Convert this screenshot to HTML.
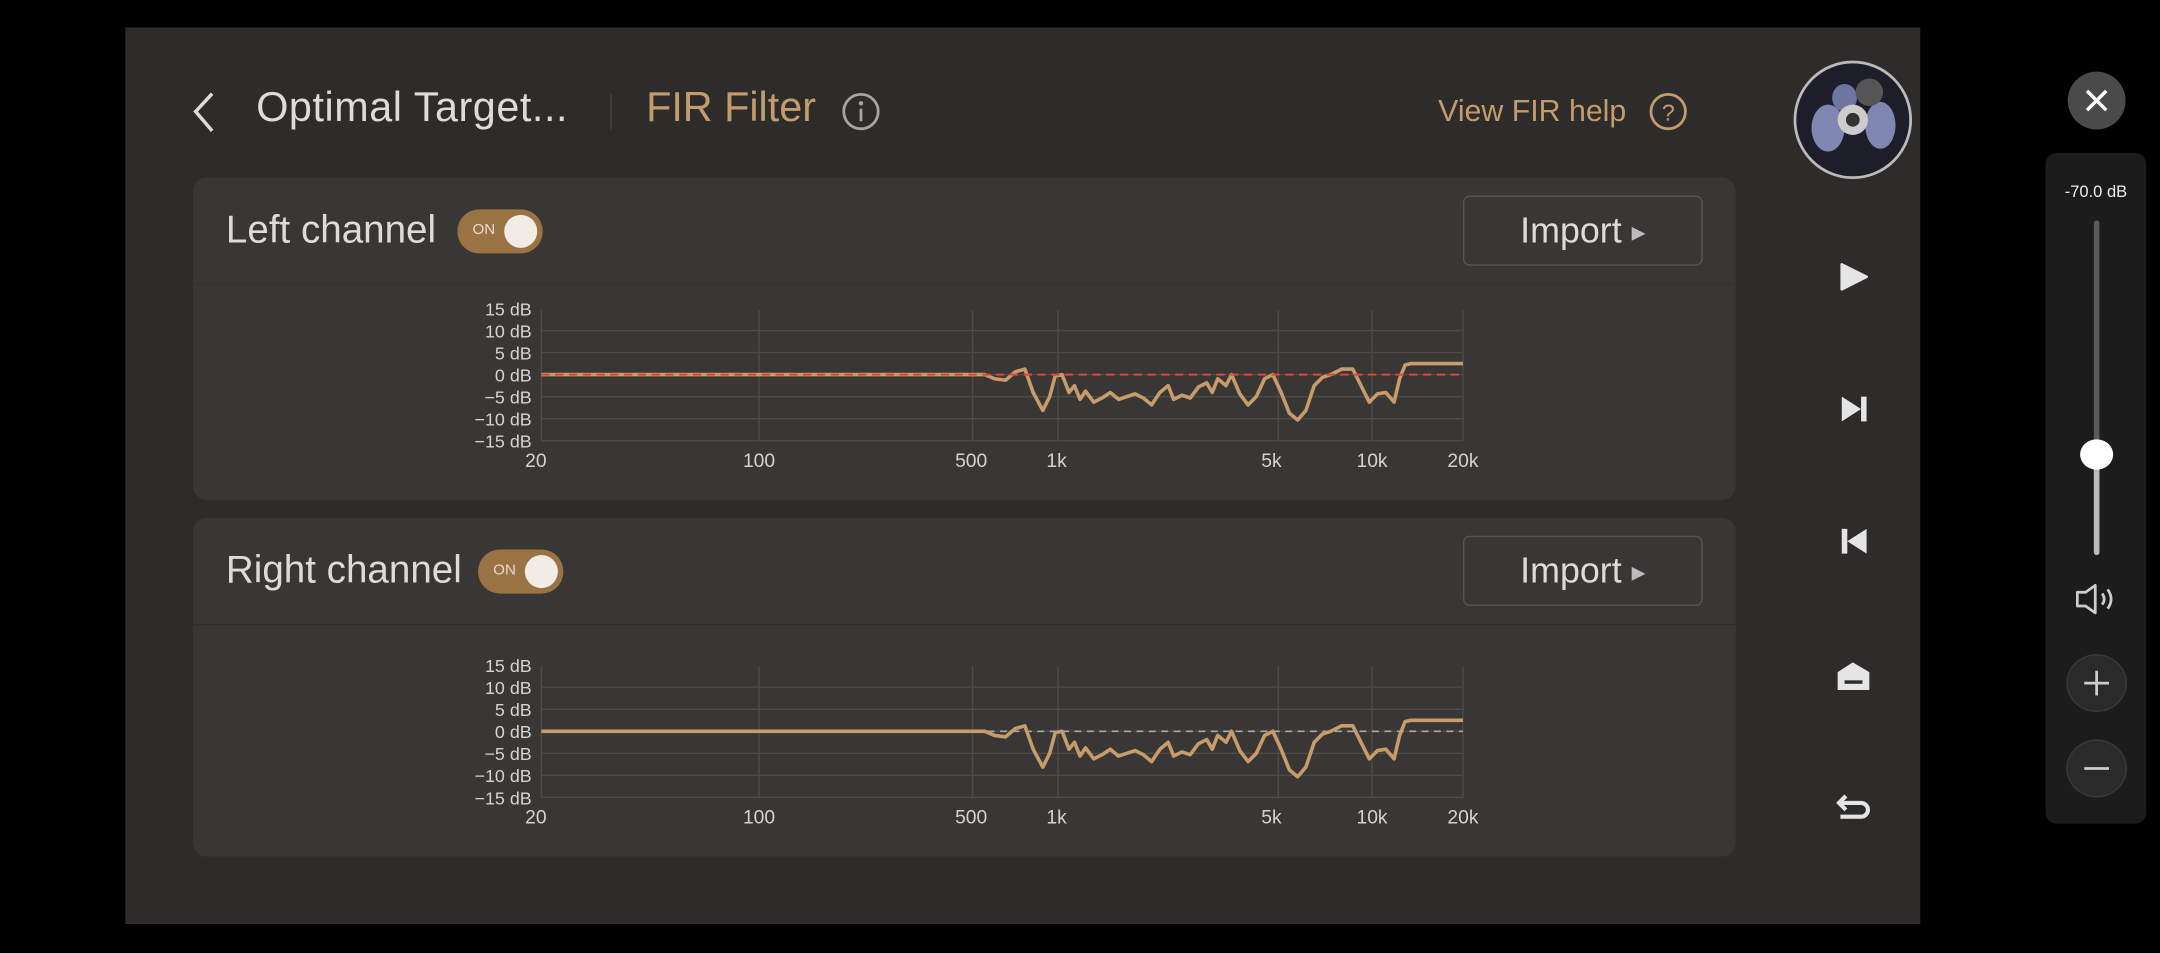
<!DOCTYPE html>
<html><head><meta charset="utf-8"><style>
html,body{margin:0;padding:0;background:#000;width:2160px;height:953px;overflow:hidden}
#s{position:absolute;left:0;top:0;width:1568px;height:692px;transform:scale(1.37755,1.3772);transform-origin:0 0;font-family:"Liberation Sans",sans-serif}
.a{position:absolute}
.t{color:#dedbd8}
.card{position:absolute;background:#393735;border-radius:10px}
.tog{position:absolute;width:62px;height:32px;border-radius:16px;background:#9a7345}
.tog span{position:absolute;left:11px;top:9px;font-size:11px;color:#e8dccb}
.tog i{position:absolute;right:4px;top:4px;width:24px;height:24px;border-radius:50%;background:#f1ece6}
.imp{position:absolute;width:172px;height:49px;border:1px solid #57534f;border-radius:5px;color:#dedbd8;font-size:26px;line-height:49px;text-align:center}
</style></head><body><div id="s">
<div class="a" style="left:91px;top:20px;width:1303px;height:651px;background:#2e2c2a"></div>
<svg class="a" style="left:136px;top:66px" width="24" height="32"><path d="M18 2 L6 15 L18 29" stroke="#dedbd8" stroke-width="2.5" fill="none"/></svg>
<div class="a t" style="left:186px;top:62px;font-size:30px;letter-spacing:0.4px">Optimal Target...</div>
<div class="a" style="left:443px;top:68px;width:1px;height:26px;background:#46423f"></div>
<div class="a" style="left:469px;top:62px;font-size:30px;color:#c39c6d">FIR Filter</div>
<svg class="a" style="left:610px;top:66px" width="30" height="30"><circle cx="15" cy="15" r="12.5" stroke="#a9a5a1" stroke-width="2" fill="none"/><circle cx="15" cy="9" r="1.6" fill="#a9a5a1"/><path d="M15 13V22" stroke="#a9a5a1" stroke-width="2"/></svg>
<div class="a" style="left:1044px;top:68px;font-size:22px;color:#c39c6d">View FIR help</div>
<svg class="a" style="left:1196px;top:66px" width="30" height="30"><circle cx="15" cy="15" r="12.5" stroke="#c39c6d" stroke-width="2" fill="none"/><text x="15" y="21.5" text-anchor="middle" font-size="17" fill="#c39c6d" font-family="Liberation Sans">?</text></svg>

<div class="card" style="left:140px;top:129px;width:1120px;height:234px"></div>
<div class="a" style="left:140px;top:206px;width:1120px;height:1px;background:#34322f"></div>
<div class="a t" style="left:164px;top:151px;font-size:28px">Left channel</div>
<div class="tog" style="left:332px;top:152px"><span>ON</span><i></i></div>
<div class="imp" style="left:1062px;top:142px">Import <span style="font-size:13px;color:#bbb;vertical-align:3px">▶</span></div>

<div class="card" style="left:140px;top:376px;width:1120px;height:246px"></div>
<div class="a" style="left:140px;top:453px;width:1120px;height:1px;background:#2f2d2b"></div>
<div class="a t" style="left:164px;top:398px;font-size:28px">Right channel</div>
<div class="tog" style="left:347px;top:399px"><span>ON</span><i></i></div>
<div class="imp" style="left:1062px;top:389px">Import <span style="font-size:13px;color:#bbb;vertical-align:3px">▶</span></div>

<svg class="a" style="left:0;top:0" width="1568" height="692" font-family="Liberation Sans" font-size="13" fill="#d6d2ce">
<defs>
<g id="grid" stroke="#4d4a47" stroke-width="1">
<path d="M393 240H1062M393 256H1062M393 272H1062M393 288H1062M393 304H1062M393 320H1062"/>
<path d="M393 225V320M551 225V320M706 225V320M768 225V320M928 225V320M996 225V320M1062 225V320"/>
</g>
<g id="lab" text-anchor="end">
<text x="386" y="229">15 dB</text><text x="386" y="245">10 dB</text><text x="386" y="261">5 dB</text><text x="386" y="277">0 dB</text><text x="386" y="293">−5 dB</text><text x="386" y="309">−10 dB</text><text x="386" y="325">−15 dB</text>
</g>
<g id="xl" text-anchor="middle" font-size="14">
<text x="389" y="339">20</text><text x="551" y="339">100</text><text x="705" y="339">500</text><text x="767" y="339">1k</text><text x="923" y="339">5k</text><text x="996" y="339">10k</text><text x="1062" y="339">20k</text>
</g>
<path id="cv" fill="none" stroke="#c79b6a" stroke-width="2.6" stroke-linejoin="round" d="M393 272L715 272L722 275L730 276L737 270L744 268L750 285L757 298L762 288L766 273L771 272L776 285L780 280L784 290L788 284L794 292L800 289L806 285L812 290L818 288L824 286L830 289L836 294L842 285L848 280L852 290L858 287L864 289L870 281L876 278L880 285L884 275L890 280L894 272L900 286L906 294L912 288L918 275L924 272L930 285L936 300L942 305L948 298L954 280L960 274L966 272L974 268L982 268L988 280L994 292L1000 286L1006 285L1012 292L1016 275L1020 265L1024 264L1062 264"/>
</defs>
<use href="#grid"/><use href="#lab"/><use href="#xl"/>
<use href="#cv"/>
<path d="M393 272H1062" stroke="#e0443a" stroke-width="1.5" stroke-dasharray="6 4"/>
<g transform="translate(0,259)">
<use href="#grid"/><use href="#lab"/><use href="#xl"/>
<path d="M393 272H1062" stroke="#aaa" stroke-width="1.2" stroke-dasharray="5 4"/>
<use href="#cv"/>
</g>
</svg>

<!-- album -->
<svg class="a" style="left:1301px;top:43px" width="88" height="88">
<circle cx="44" cy="44" r="42" fill="#1e1e2a" stroke="#bbb" stroke-width="2"/>
<ellipse cx="26" cy="50" rx="12" ry="17" fill="#7f86b2"/><ellipse cx="64" cy="48" rx="11" ry="17" fill="#7f86b2"/><ellipse cx="38" cy="28" rx="9" ry="10" fill="#6d75a0"/><ellipse cx="56" cy="24" rx="10" ry="10" fill="#555"/>
<circle cx="44" cy="44" r="11" fill="#ccc"/><circle cx="44" cy="44" r="5" fill="#333"/>
</svg>
<svg class="a" style="left:1331px;top:187px" width="30" height="230" fill="#e5e5e5">
<path d="M6 5L24 14L6 23Z" stroke="#e5e5e5" stroke-width="2" stroke-linejoin="round"/>
<path d="M6 101L20 110L6 119Z"/><rect x="20" y="101" width="4" height="18"/>
<path d="M24 197L10 206L24 215Z"/><rect x="6" y="197" width="4" height="18"/>
</svg>
<svg class="a" style="left:1331px;top:477px" width="30" height="125" fill="#e5e5e5">
<path d="M3 11L14 4L26 11V24H3Z"/><rect x="8" y="17" width="13" height="2.5" fill="#2e2c2a"/>
<path d="M9 101L4 106L9 111M4 106H20A5 5 0 0 1 20 116H5" stroke="#e5e5e5" stroke-width="3" fill="none"/>
</svg>

<!-- right panel -->
<div class="a" style="left:1501px;top:52px;width:42px;height:42px;border-radius:50%;background:#4a4a4a"></div>
<svg class="a" style="left:1501px;top:52px" width="42" height="42"><path d="M14 14L28 28M28 14L14 28" stroke="#fff" stroke-width="2.5"/></svg>
<div class="a" style="left:1485px;top:111px;width:73px;height:487px;border-radius:8px;background:#1c1c1c"></div>
<div class="a" style="left:1485px;top:132px;width:73px;text-align:center;font-size:12px;color:#eee">-70.0 dB</div>
<div class="a" style="left:1520px;top:160px;width:4px;height:243px;border-radius:2px;background:#5a5a5a"></div>
<div class="a" style="left:1520px;top:330px;width:4px;height:73px;border-radius:2px;background:#bbb"></div>
<div class="a" style="left:1510px;top:319px;width:24px;height:22px;border-radius:50%;background:#fff"></div>
<svg class="a" style="left:1505px;top:422px" width="36" height="26"><path d="M3 8H9L16 3V23L9 18H3Z" stroke="#ccc" stroke-width="2" fill="none" stroke-linejoin="round"/><path d="M21 9Q24 13 21 17M25 6Q30 13 25 20" stroke="#ccc" stroke-width="2" fill="none"/></svg>
<div class="a" style="left:1500px;top:475px;width:42px;height:40px;border-radius:50%;background:#2a2a2a;border:1px solid #3a3a3a"></div>
<svg class="a" style="left:1500px;top:475px" width="44" height="42"><path d="M22 12V30M13 21H31" stroke="#ccc" stroke-width="2"/></svg>
<div class="a" style="left:1500px;top:537px;width:42px;height:40px;border-radius:50%;background:#2a2a2a;border:1px solid #3a3a3a"></div>
<svg class="a" style="left:1500px;top:537px" width="44" height="42"><path d="M13 21H31" stroke="#ccc" stroke-width="2"/></svg>
</div></body></html>
